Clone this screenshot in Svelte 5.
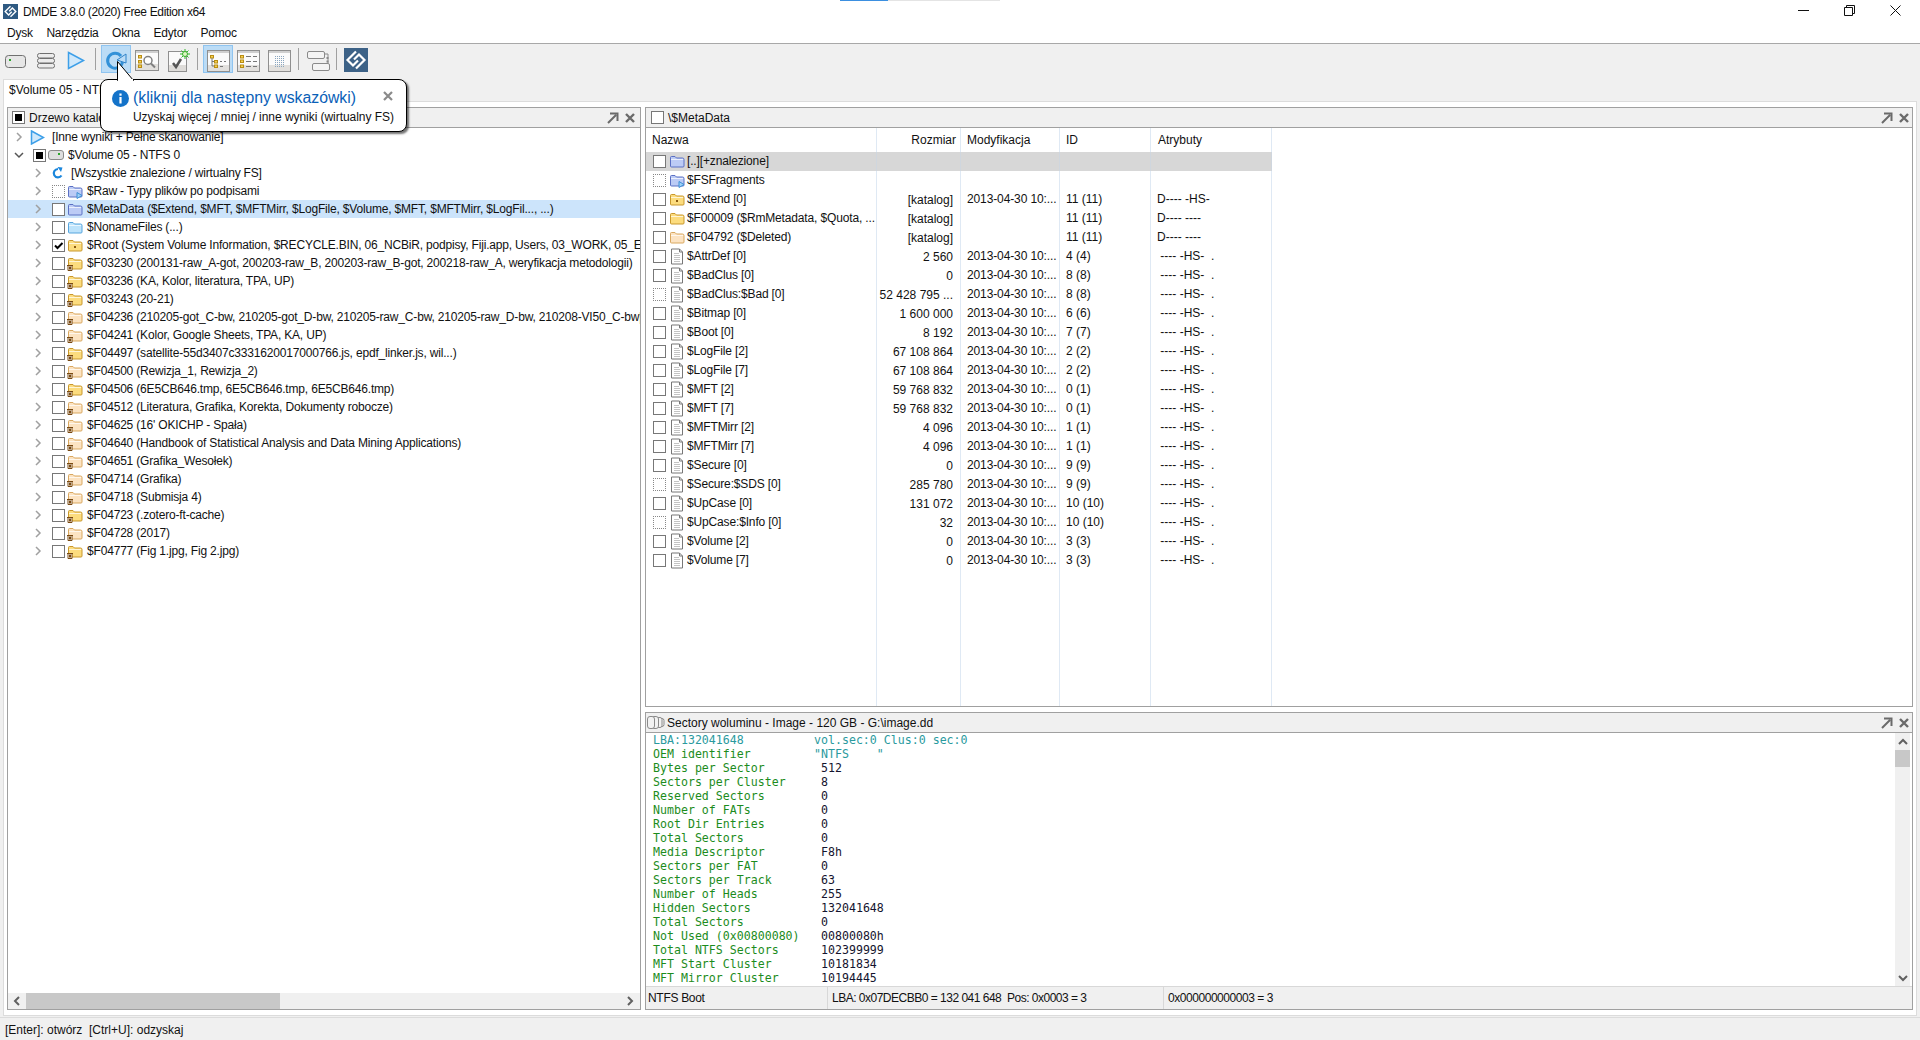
<script>
	const menus = ['Dysk', 'Narzędzia', 'Okna', 'Edytor', 'Pomoc'];

	const tree = [
		{ name: '$F03230 (200131-raw_A-got, 200203-raw_B, 200203-raw_B-got, 200218-raw_A, weryfikacja metodologii)', kind: 'y' },
		{ name: '$F03236 (KA, Kolor, literatura, TPA, UP)', kind: 'y' },
		{ name: '$F03243 (20-21)', kind: 'y' },
		{ name: '$F04236 (210205-got_C-bw, 210205-got_D-bw, 210205-raw_C-bw, 210205-raw_D-bw, 210208-VI50_C-bw[1]...', kind: 'p' },
		{ name: '$F04241 (Kolor, Google Sheets, TPA, KA, UP)', kind: 'p' },
		{ name: '$F04497 (satellite-55d3407c3331620017000766.js, epdf_linker.js, wil...)', kind: 'y' },
		{ name: '$F04500 (Rewizja_1, Rewizja_2)', kind: 'p' },
		{ name: '$F04506 (6E5CB646.tmp, 6E5CB646.tmp, 6E5CB646.tmp)', kind: 'y' },
		{ name: '$F04512 (Literatura, Grafika, Korekta, Dokumenty robocze)', kind: 'p' },
		{ name: "$F04625 (16' OKICHP - Spała)", kind: 'p' },
		{ name: '$F04640 (Handbook of Statistical Analysis and Data Mining Applications)', kind: 'p' },
		{ name: '$F04651 (Grafika_Wesołek)', kind: 'p' },
		{ name: '$F04714 (Grafika)', kind: 'p' },
		{ name: '$F04718 (Submisja 4)', kind: 'p' },
		{ name: '$F04723 (.zotero-ft-cache)', kind: 'y' },
		{ name: '$F04728 (2017)', kind: 'p' },
		{ name: '$F04777 (Fig 1.jpg, Fig 2.jpg)', kind: 'y' }
	];

	const folderColors = {
		y: ['#fcdc7e', '#c9982c'],
		p: ['#fce3c2', '#d9a860'],
		b: ['#bccbf5', '#5b70c4'],
		c: ['#bde3fb', '#56a5dd']
	};

	const date = '2013-04-30 10:...';
	const attr = ' ---- -HS-  .';
	const files = [
		['$AttrDef [0]', '2 560', '4 (4)'],
		['$BadClus [0]', '0', '8 (8)'],
		['$BadClus:$Bad [0]', '52 428 795 ...', '8 (8)', true],
		['$Bitmap [0]', '1 600 000', '6 (6)'],
		['$Boot [0]', '8 192', '7 (7)'],
		['$LogFile [2]', '67 108 864', '2 (2)'],
		['$LogFile [7]', '67 108 864', '2 (2)'],
		['$MFT [2]', '59 768 832', '0 (1)'],
		['$MFT [7]', '59 768 832', '0 (1)'],
		['$MFTMirr [2]', '4 096', '1 (1)'],
		['$MFTMirr [7]', '4 096', '1 (1)'],
		['$Secure [0]', '0', '9 (9)'],
		['$Secure:$SDS [0]', '285 780', '9 (9)', true],
		['$UpCase [0]', '131 072', '10 (10)'],
		['$UpCase:$Info [0]', '32', '10 (10)', true],
		['$Volume [2]', '0', '3 (3)'],
		['$Volume [7]', '0', '3 (3)']
	];

	const boot = [
		['Bytes per Sector', '512'],
		['Sectors per Cluster', '8'],
		['Reserved Sectors', '0'],
		['Number of FATs', '0'],
		['Root Dir Entries', '0'],
		['Total Sectors', '0'],
		['Media Descriptor', 'F8h'],
		['Sectors per FAT', '0'],
		['Sectors per Track', '63'],
		['Number of Heads', '255'],
		['Hidden Sectors', '132041648'],
		['Total Sectors', '0'],
		['Not Used (0x00800080)', '00800080h'],
		['Total NTFS Sectors', '102399999'],
		['MFT Start Cluster', '10181834'],
		['MFT Mirror Cluster', '10194445']
	];
</script>

{#snippet folder(kind, badge = '')}
	<svg class="ico" width="16" height="15" viewBox="0 0 16 15">
		<path d="M1.5 12V3.5q0-1 1-1h3.5l1.5 1.5h6q1.5 0 1.5 1.5V12q0 1-1 1h-11.5q-1 0-1-1z" fill={folderColors[kind][0]} stroke={folderColors[kind][1]} />
		<path d="M2 5.5h12" stroke="#fff" stroke-opacity=".7" />
		{#if badge === 'trash'}
			<path d="M0 9.5h6M1 9.5v5h4v-5M2.5 10.5v3M3.5 10.5v3" fill="#fff" stroke="#7a4a12" />
		{:else if badge === 'dot'}
			<rect x="7" y="8" width="2" height="2" fill="#8a5a10" />
		{:else if badge === 'play'}
			<path d="M10 8.5l5 3-5 3z" fill="#9fd0f5" stroke="#3f8fd6" />
		{/if}
	</svg>
{/snippet}

{#snippet page()}
	<svg class="ico" width="16" height="17" viewBox="0 0 16 17">
		<path d="M2.5 1h8l3 3v12h-11z" fill="#fff" stroke="#777" />
		<path d="M10.5 1v3h3" fill="none" stroke="#777" />
		<path d="M5 5h5v1H5zM5 7h6v1H5zM5 9h6v1H5zM5 11h6v1H5zM5 13h6v1H5z" fill="#c4c4c4" />
	</svg>
{/snippet}

{#snippet chev(open = false)}
	<svg class="chev" width="10" height="10" viewBox="0 0 10 10">
		{#if open}
			<path d="M1 3l4 4 4-4" fill="none" stroke="#555" stroke-width="1.5" />
		{:else}
			<path d="M3 1l4 4-4 4" fill="none" stroke="#a0a0a0" stroke-width="1.5" />
		{/if}
	</svg>
{/snippet}

{#snippet panelTools()}
	<svg class="tools" width="32" height="13" viewBox="0 0 32 13">
		<path d="M2 12L10 4M4 2.5h7.5V10" fill="none" stroke="#6a6a6a" stroke-width="2" />
		<path d="M20 3l8 8M28 3l-8 8" fill="none" stroke="#6a6a6a" stroke-width="2.4" />
	</svg>
{/snippet}

{#snippet logo(size, bg)}
	<svg width={size} height={size} viewBox="0 0 24 24">
		<rect width="24" height="24" fill={bg} />
		<path d="M12 3.500L3.500 12 9 17.500l5-5M12 20.500l8.500-8.500L15 6.500l-5 5" fill="none" stroke="#fff" stroke-width="2.200" />
	</svg>
{/snippet}

<div class="app">
	<div class="progress"><span></span></div>

	<header class="titlebar">
		<span class="applogo">{@render logo(15, '#2f5a82')}</span>
		<span class="apptitle">DMDE 3.8.0 (2020) Free Edition x64</span>
		<div class="winbtns">
			<svg width="11" height="11" viewBox="0 0 11 11"><path d="M0 5.5h11" stroke="#111" /></svg>
			<svg width="11" height="11" viewBox="0 0 11 11"><path d="M.5 2.5h8v8h-8zM2.5 2.5v-2h8v8h-2" fill="none" stroke="#111" /></svg>
			<svg width="11" height="11" viewBox="0 0 11 11"><path d="M.5.5l10 10M10.5.5l-10 10" stroke="#111" /></svg>
		</div>
	</header>

	<nav class="menubar">
		{#each menus as m}<span>{m}</span>{/each}
	</nav>

	<div class="toolbar">
		<button class="tb" aria-label="Dysk">
			<svg width="26" height="24" viewBox="0 0 26 24"><rect x="3.5" y="7.5" width="20" height="12" rx="3" fill="#e6e6e6" stroke="#707070" /><rect x="7" y="11" width="2" height="2" fill="#2aa52a" /></svg>
		</button>
		<button class="tb" aria-label="Partycje">
			<svg width="26" height="24" viewBox="0 0 26 24"><g fill="#ececec" stroke="#707070"><rect x="4.500" y="5.500" width="17" height="4.500" rx="2" /><rect x="4.500" y="10.500" width="17" height="4.500" rx="2" /><rect x="4.500" y="15.500" width="17" height="4.500" rx="2" /></g></svg>
		</button>
		<button class="tb" aria-label="Skanuj">
			<svg width="26" height="24" viewBox="0 0 26 24"><path d="M4.500 4.500l15 8-15 8z" fill="#cfe8fb" stroke="#3d9fe8" stroke-width="1.500" /></svg>
		</button>
		<i class="sep first"></i>
		<button class="tb on" aria-label="Więcej wyników">
			<svg width="26" height="24" viewBox="0 0 26 24"><path d="M18 8A7.500 7.500 0 1 0 19.500 14" fill="none" stroke="#3391d8" stroke-width="3" /><path d="M14 12l9-6v9z" fill="#bcdcf6" stroke="#2f82c8" /></svg>
		</button>
		<button class="tb" aria-label="Szukaj">
			<svg width="26" height="24" viewBox="0 0 26 24"><rect x="1.500" y="2.500" width="23" height="20" fill="#fbfbfb" stroke="#8f8f8f" /><rect x="2" y="3" width="22" height="2" fill="#cfcfcf" /><rect x="2" y="16" width="22" height="6" fill="#e2e0dd" /><g fill="#f6d24e" stroke="#b88c14"><rect x="4.500" y="7.500" width="3" height="2.500" /><rect x="4.500" y="12.500" width="3" height="2.500" /><rect x="4.500" y="17" width="3" height="2.500" /></g><circle cx="14" cy="12.500" r="4" fill="#fff" stroke="#808080" stroke-width="1.500" /><path d="M17 15.500l4 4" stroke="#808080" stroke-width="2" /></svg>
		</button>
		<button class="tb" aria-label="Odzyskaj">
			<svg width="26" height="24" viewBox="0 0 26 24"><rect x="3.500" y="3.500" width="18" height="20" fill="#fafafa" stroke="#8f8f8f" /><rect x="4" y="17" width="17" height="6" fill="#dedcd9" /><path d="M8 15l3 4 5-8" fill="none" stroke="#555" stroke-width="2.500" /><path d="M20 1v10M15 6h10M16.500 2.500l7 7M23.500 2.500l-7 7" stroke="#35b52a" /><circle cx="20" cy="6" r="2.500" fill="#dff5c4" stroke="#35b52a" /></svg>
		</button>
		<i class="sep"></i>
		<button class="tb on" aria-label="Drzewo">
			<svg width="26" height="24" viewBox="0 0 26 24"><rect x="2.500" y="2.500" width="22" height="21" fill="#fbfbfb" stroke="#8f8f8f" /><rect x="3" y="3" width="21" height="2" fill="#cfcfcf" /><rect x="3" y="17" width="21" height="6" fill="#e2e0dd" /><g fill="#f6d24e" stroke="#b88c14"><rect x="5.500" y="7.500" width="3" height="2.500" /><rect x="9.500" y="12.500" width="3" height="2.500" /><rect x="9.500" y="17" width="3" height="2.500" /></g><path d="M7 10v8h2M7 13.500h2M15 13.500h2M19 13.500h2M15 18.500h3" stroke="#777" fill="none" /></svg>
		</button>
		<button class="tb nudge" aria-label="Lista">
			<svg width="26" height="24" viewBox="0 0 26 24"><rect x="2.500" y="2.500" width="22" height="21" fill="#fbfbfb" stroke="#8f8f8f" /><rect x="3" y="3" width="21" height="2" fill="#cfcfcf" /><rect x="3" y="17" width="21" height="6" fill="#e2e0dd" /><g fill="#f6d24e" stroke="#b88c14"><rect x="5.500" y="7.500" width="3" height="2.500" /><rect x="5.500" y="12" width="3" height="2.500" /><rect x="5.500" y="17" width="3" height="2.500" /></g><path d="M11 8.500h5M18 8.500h4M11 13.500h5M18 13.500h4M11 18.500h5M18 18.500h4" stroke="#777" /></svg>
		</button>
		<button class="tb" aria-label="Siatka">
			<svg width="26" height="24" viewBox="0 0 26 24"><rect x="2.500" y="2.500" width="22" height="21" fill="#fbfbfb" stroke="#8f8f8f" /><rect x="3" y="3" width="21" height="2" fill="#cfcfcf" /><rect x="3" y="17" width="21" height="6" fill="#e2e0dd" /><path d="M9 8.500h9M9 10.500h9M9 12.500h9M9 14.500h9M9 16.500h9M9 18.500h9" stroke="#8aa6bf" stroke-dasharray="1 1" /></svg>
		</button>
		<i class="sep wide"></i>
		<button class="tb" aria-label="Okna">
			<svg width="26" height="24" viewBox="0 0 26 24"><g fill="#f4f4f4" stroke="#8a8a8a"><rect x="2.500" y="3.500" width="17" height="7" rx="1.500" /><rect x="7.500" y="15.500" width="17" height="7" rx="1.500" /></g><path d="M20 6h3v9" fill="none" stroke="#8a8a8a" /><path d="M21.500 9h2v2h-2zM21.500 12.500h2v2h-2z" fill="#8a8a8a" /></svg>
		</button>
		<i class="sep last"></i>
		<button class="tb" aria-label="DMDE">{@render logo(24, '#3d6287')}</button>
	</div>

	<div class="tabs">
		<div class="tab">$Volume 05 - NTFS 0</div>
	</div>

	<main class="page">
		<section class="panel left">
			<div class="phead">
				<span class="box small-fill"></span>
				<span class="ptitle">Drzewo katalogów</span>
				{@render panelTools()}
			</div>
			<div class="tree">
				<div class="row l0 top">
					{@render chev()}
					<svg class="rowicon" width="15" height="15" viewBox="0 0 15 15"><path d="M1.500 1l12 6.500-12 6.500z" fill="#cfe8fb" stroke="#3d9fe8" stroke-width="1.500" /></svg>
					<span class="t">[Inne wyniki + Pełne skanowanie]</span>
				</div>
				<div class="row l0">
					{@render chev(true)}
					<span class="box small-fill"></span>
					<svg class="rowicon" width="16" height="10" viewBox="0 0 16 10"><rect x=".5" y=".5" width="15" height="9" rx="2.500" fill="#dedede" stroke="#8a8a8a" /><rect x="10" y="3" width="2" height="2" fill="#2aa52a" /></svg>
					<span class="t">$Volume 05 - NTFS 0</span>
				</div>
				<div class="row l1 all">
					{@render chev()}
					<svg class="rowicon" width="13" height="12" viewBox="0 0 13 12"><path d="M10.500 8.500A4.200 4.200 0 1 1 7 2" fill="none" stroke="#1a86dc" stroke-width="2.200" /><path d="M6.500 0l5 .5-1.500 4.500z" fill="#1a86dc" /></svg>
					<span class="t">[Wszystkie znalezione / wirtualny FS]</span>
				</div>
				<div class="row l1">
					{@render chev()}
					<span class="box dotted"></span>
					{@render folder('b', 'play')}
					<span class="t">$Raw - Typy plików po podpisami</span>
				</div>
				<div class="row l1 sel">
					{@render chev()}
					<span class="box"></span>
					{@render folder('b')}
					<span class="t">$MetaData ($Extend, $MFT, $MFTMirr, $LogFile, $Volume, $MFT, $MFTMirr, $LogFil..., ...)</span>
				</div>
				<div class="row l1">
					{@render chev()}
					<span class="box"></span>
					{@render folder('c')}
					<span class="t">$NonameFiles (...)</span>
				</div>
				<div class="row l1">
					{@render chev()}
					<span class="box checked">
						<svg width="11" height="11" viewBox="0 0 11 11"><path d="M2 5.500l2.500 2.500L9.500 3" fill="none" stroke="#000" stroke-width="2" /></svg>
					</span>
					{@render folder('y', 'dot')}
					<span class="t">$Root (System Volume Information, $RECYCLE.BIN, 06_NCBiR, podpisy, Fiji.app, Users, 03_WORK, 05_Edukacja, ...)</span>
				</div>
				{#each tree as item}
					<div class="row l1">
						{@render chev()}
						<span class="box"></span>
						{@render folder(item.kind, 'trash')}
						<span class="t">{item.name}</span>
					</div>
				{/each}
			</div>
			<div class="hscroll">
				<svg width="8" height="10" viewBox="0 0 8 10"><path d="M6 1L2 5l4 4" fill="none" stroke="#606060" stroke-width="2" /></svg>
				<div class="track"><div class="thumb"></div></div>
				<svg width="8" height="10" viewBox="0 0 8 10"><path d="M2 1l4 4-4 4" fill="none" stroke="#606060" stroke-width="2" /></svg>
			</div>
		</section>

		<div class="rightcol">
			<section class="panel">
				<div class="phead">
					<span class="box"></span>
					<span class="ptitle">\$MetaData</span>
					{@render panelTools()}
				</div>
				<div class="listing">
					<div class="cols head">
						<span class="c1">Nazwa</span>
						<span class="c2">Rozmiar</span>
						<span class="c3">Modyfikacja</span>
						<span class="c4">ID</span>
						<span class="c5">Atrybuty</span>
					</div>
					<div class="cols item up">
						<span class="c1"><span class="box"></span>{@render folder('b')}<b>[..][+znalezione]</b></span>
						<span class="c2"></span><span class="c3"></span><span class="c4"></span><span class="c5"></span>
					</div>
					<div class="cols item">
						<span class="c1"><span class="box dotted"></span>{@render folder('b', 'play')}<b>$FSFragments</b></span>
						<span class="c2"></span><span class="c3"></span><span class="c4"></span><span class="c5"></span>
					</div>
					<div class="cols item">
						<span class="c1"><span class="box"></span>{@render folder('y', 'dot')}<b>$Extend [0]</b></span>
						<span class="c2">[katalog]</span><span class="c3">{date}</span><span class="c4">11 (11)</span><span class="c5">D---- -HS-</span>
					</div>
					<div class="cols item">
						<span class="c1"><span class="box"></span>{@render folder('y')}<b>$F00009 ($RmMetadata, $Quota, ...</b></span>
						<span class="c2">[katalog]</span><span class="c3"></span><span class="c4">11 (11)</span><span class="c5">D---- ----</span>
					</div>
					<div class="cols item">
						<span class="c1"><span class="box"></span>{@render folder('p')}<b>$F04792 ($Deleted)</b></span>
						<span class="c2">[katalog]</span><span class="c3"></span><span class="c4">11 (11)</span><span class="c5">D---- ----</span>
					</div>
					{#each files as f}
						<div class="cols item">
							<span class="c1"><span class="box" class:dotted={f[3]}></span>{@render page()}<b>{f[0]}</b></span>
							<span class="c2">{f[1]}</span><span class="c3">{date}</span><span class="c4">{f[2]}</span><span class="c5">{attr}</span>
						</div>
					{/each}
					<div class="cols fill">
						<span class="c1"></span><span class="c2"></span><span class="c3"></span><span class="c4"></span><span class="c5"></span>
					</div>
				</div>
			</section>

			<section class="panel">
				<div class="phead">
					<svg class="discs" width="18" height="13" viewBox="0 0 18 13"><g fill="#f2f2f2" stroke="#8a8a8a"><rect x="13" y="2.500" width="4" height="8" rx="2" /><rect x="9" y="1.500" width="6" height="10" rx="2" /><rect x="4.500" y=".5" width="7" height="12" rx="2.500" /><rect x=".5" y=".5" width="7" height="12" rx="2.500" /></g></svg>
					<span class="ptitle near">Sectory woluminu - Image - 120 GB - G:\image.dd</span>
					{@render panelTools()}
				</div>
				<div class="hexwrap">
					<div class="hex">
						<div class="ln"><span class="teal k">LBA:132041648</span><span class="teal">vol.sec:0 Clus:0 sec:0</span></div>
						<div class="ln"><span class="green k">OEM identifier</span><span class="teal">"NTFS    "</span></div>
						{#each boot as b}
							<div class="ln"><span class="green k">{b[0]}</span><span class="v">{b[1]}</span></div>
						{/each}
					</div>
					<div class="vscroll">
						<svg width="10" height="8" viewBox="0 0 10 8"><path d="M1 6l4-4 4 4" fill="none" stroke="#606060" stroke-width="2" /></svg>
						<div class="vtrack"><div class="vthumb"></div></div>
						<svg width="10" height="8" viewBox="0 0 10 8"><path d="M1 2l4 4 4-4" fill="none" stroke="#606060" stroke-width="2" /></svg>
					</div>
				</div>
				<div class="pfoot">
					<span class="f1">NTFS Boot</span>
					<span class="f2">LBA: 0x07DECBB0 = 132 041 648&nbsp; Pos: 0x0003 = 3</span>
					<span class="f3">0x000000000003 = 3</span>
				</div>
			</section>
		</div>
	</main>

	<footer class="status">[Enter]: otwórz&nbsp; [Ctrl+U]: odzyskaj</footer>

	<aside class="tip">
		<svg class="tail" width="20" height="20" viewBox="0 0 20 20"><path d="M1.500 0.500V19.500H17.500z" fill="#fff" stroke="#000" /><path d="M2 18h15v2H2z" fill="#fff" /></svg>
		<svg class="info" width="17" height="17" viewBox="0 0 17 17"><circle cx="8.500" cy="8.500" r="8.500" fill="#1473c9" /><rect x="7.400" y="3.500" width="2.200" height="2.200" fill="#fff" /><rect x="7.400" y="7" width="2.200" height="6.500" fill="#fff" /></svg>
		<div class="tiptext">
			<div class="tiptitle">(kliknij dla następny wskazówki)</div>
			<div class="tipsub">Uzyskaj więcej / mniej / inne wyniki (wirtualny FS)</div>
		</div>
		<svg class="tipx" width="10" height="10" viewBox="0 0 10 10"><path d="M1 1l8 8M9 1l-8 8" stroke="#8a8a8a" stroke-width="2.200" /></svg>
	</aside>
</div>

<style>
	:global(body) {
		margin: 0;
		background: #f0f0f0;
	}
	.app {
		position: relative;
		width: 1920px;
		height: 1040px;
		overflow: hidden;
		display: flex;
		flex-direction: column;
		font: 12px/16px 'Liberation Sans', Arial, sans-serif;
		color: #111;
	}
	svg {
		display: block;
		flex: none;
	}
	.progress {
		position: absolute;
		top: 0;
		left: 840px;
		width: 160px;
		height: 1px;
		background: #e4e4e4;
	}
	.progress span {
		display: block;
		width: 48px;
		height: 1px;
		background: #3b8fe0;
	}
	.titlebar {
		height: 22px;
		background: #fff;
		display: flex;
		align-items: center;
		padding: 2px 0 0 3px;
		box-sizing: border-box;
	}
	.applogo {
		width: 20px;
		margin-top: -2px;
	}
	.apptitle {
		letter-spacing: -0.35px;
	}
	.winbtns {
		margin-left: auto;
		display: flex;
		gap: 35px;
		padding-right: 19px;
		margin-top: -4px;
	}
	.menubar {
		height: 22px;
		background: #fff;
		border-bottom: 1px solid #a8a8a8;
		box-sizing: border-box;
		display: flex;
		align-items: center;
		gap: 13.5px;
		padding: 1px 0 0 7px;
		letter-spacing: -0.2px;
	}
	.toolbar {
		height: 32px;
		padding-top: 1px;
		box-sizing: border-box;
		display: flex;
		align-items: flex-start;
	}
	.tb {
		width: 30px;
		height: 28px;
		margin-right: 1px;
		padding: 2px 0 0;
		border: 1px solid transparent;
		background: none;
		display: flex;
		align-items: center;
		justify-content: center;
	}
	.tb:last-child {
		margin-right: 0;
	}
	.tb.nudge {
		margin-left: -1px;
	}
	.tb.on {
		background: #bbdcf6;
		border-color: #8fc4f0;
	}
	.sep {
		width: 1px;
		height: 22px;
		margin: 3px 5px 0 3px;
		background: #a0a0a0;
	}
	.sep.first {
		margin-left: 2px;
	}
	.sep.wide {
		margin: 3px 4px 0 3px;
	}
	.sep.last {
		margin: 3px 4px 0 2px;
	}
	.tabs {
		height: 25px;
		padding: 3px 0 0 3px;
		box-sizing: border-box;
	}
	.tab {
		width: 140px;
		height: 23px;
		box-sizing: border-box;
		padding: 2px 0 0 5px;
		background: #fff;
		border: 1px solid #dcdcdc;
		border-bottom: 0;
		position: relative;
		z-index: 1;
	}
	.page {
		margin: 0 3px;
		height: 915px;
		box-sizing: border-box;
		padding: 5px 3px;
		background: #fff;
		border: 1px solid #dcdcdc;
		display: grid;
		grid-template-columns: 634px 1268px;
		gap: 4px;
	}
	.rightcol {
		display: grid;
		grid-template-rows: 600px 298px;
		gap: 5px;
		min-height: 0;
	}
	.panel {
		border: 1px solid #a0a0a0;
		display: flex;
		flex-direction: column;
		background: #fff;
		min-height: 0;
		min-width: 0;
		overflow: hidden;
	}
	.phead {
		height: 20px;
		flex: none;
		box-sizing: border-box;
		background: #f0f0f0;
		border-bottom: 1px solid #a0a0a0;
		display: flex;
		align-items: center;
		padding-left: 5px;
	}
	.left .phead {
		padding-left: 4px;
	}
	.ptitle {
		margin-left: 4px;
	}
	.ptitle.near {
		margin-left: 2px;
	}
	.tools {
		margin-left: auto;
		margin-right: 0;
	}
	.left .tools {
		margin-right: 2px;
	}
	.discs {
		margin-left: -4px;
	}
	.box {
		width: 13px;
		height: 13px;
		box-sizing: border-box;
		flex: none;
		border: 1px solid #777;
		background: #fff;
		display: block;
		position: relative;
	}
	.box.small-fill::after {
		content: '';
		position: absolute;
		inset: 2px;
		background: #000;
	}
	.box.dotted {
		border: 1px dotted #888;
	}
	.tree {
		flex: 1;
		min-height: 0;
		overflow: hidden;
		letter-spacing: -0.18px;
	}
	.row {
		height: 18px;
		display: flex;
		align-items: center;
		white-space: nowrap;
		overflow: hidden;
	}
	.row .chev {
		margin-right: 9px;
	}
	.row.l0 {
		padding-left: 6px;
	}
	.row.l1 {
		padding-left: 25px;
	}
	.row.sel {
		background: #cce4fb;
	}
	.row .box {
		margin-right: 2px;
	}
	.row .ico {
		margin-right: 4px;
	}
	.row .rowicon {
		margin-right: 4px;
	}
	.row.top .rowicon {
		margin-left: -3px;
		margin-right: 7px;
	}
	.row.all .rowicon {
		margin-left: -1px;
		margin-right: 7px;
	}
	.hscroll {
		height: 16px;
		flex: none;
		background: #f0f0f0;
		display: flex;
		align-items: center;
		padding: 0 6px 0 5px;
	}
	.track {
		flex: 1;
		height: 16px;
		margin: 0 4px 0 1px;
	}
	.thumb {
		width: 254px;
		height: 16px;
		margin-left: 4px;
		background: #c8c8c8;
	}
	.listing {
		flex: 1;
		min-height: 0;
		display: flex;
		flex-direction: column;
		overflow: hidden;
	}
	.cols {
		display: grid;
		grid-template-columns: 231px 84px 99px 91px 121px;
		width: 626px;
		height: 24px;
		flex: none;
		align-items: stretch;
		white-space: pre;
	}
	.cols > span {
		display: flex;
		align-items: center;
		border-right: 1px solid #dfe9f4;
		padding-left: 6px;
		min-width: 0;
		overflow: hidden;
	}
	.cols .c2 {
		justify-content: flex-end;
		padding: 0 7px 0 0;
	}
	.head .c2 {
		padding-right: 4px;
	}
	.head .c5 {
		padding-left: 7px;
	}
	.cols .c1 {
		padding-left: 6px;
	}
	.item {
		height: 19px;
	}
	.item > span {
		padding-bottom: 1px;
		box-sizing: border-box;
	}
	.item .c1 {
		padding-left: 7px;
	}
	.item .c3 {
		letter-spacing: -0.12px;
	}
	.item .c1 .ico {
		margin-left: 3px;
	}
	.item b {
		font-weight: 400;
		margin-left: 2px;
		letter-spacing: -0.15px;
	}
	.up {
		background: #d7d7d7;
	}
	.up > span {
		border-right-color: #cfd6de;
	}
	.fill {
		flex: 1;
	}
	.hexwrap {
		flex: 1;
		min-height: 0;
		display: flex;
	}
	.hex {
		flex: 1;
		padding-left: 7px;
		font: 11.6px/14px 'DejaVu Sans Mono', monospace;
	}
	.ln {
		height: 14px;
		white-space: pre;
		display: flex;
	}
	.k {
		width: 161px;
		flex: none;
	}
	.ln .v {
		margin-left: 7px;
		color: #14142e;
	}
	.teal {
		color: #2a9a9e;
	}
	.green {
		color: #1c8c1c;
	}
	.vscroll {
		width: 15px;
		margin-right: 2px;
		background: #f0f0f0;
		display: flex;
		flex-direction: column;
		align-items: center;
	}
	.vscroll svg {
		margin: 5px 0 4px;
	}
	.vtrack {
		flex: 1;
		align-self: stretch;
	}
	.vthumb {
		height: 17px;
		background: #c8c8c8;
	}
	.pfoot {
		height: 23px;
		flex: none;
		box-sizing: border-box;
		background: #f0f0f0;
		border-top: 1px solid #d8d8d8;
		display: flex;
		align-items: center;
	}
	.pfoot span {
		height: 100%;
		display: flex;
		align-items: center;
		box-sizing: border-box;
		white-space: pre;
	}
	.f1 {
		width: 182px;
		padding-left: 2px;
		border-right: 1px solid #d8d8d8;
		letter-spacing: -0.3px;
	}
	.f2 {
		width: 336px;
		padding-left: 4px;
		border-right: 1px solid #d8d8d8;
		letter-spacing: -0.5px;
	}
	.f3 {
		padding-left: 4px;
		letter-spacing: -0.45px;
	}
	.status {
		margin-top: 1px;
		flex: 1;
		border-top: 1px solid #dcdcdc;
		padding: 4px 0 0 5px;
	}
	.tip {
		position: absolute;
		left: 100px;
		top: 79px;
		width: 307px;
		height: 53px;
		box-sizing: border-box;
		background: #fff;
		border: 1px solid #000;
		border-radius: 8px;
		box-shadow: 2px 2px 2px rgba(0, 0, 0, 0.55);
		z-index: 3;
	}
	.tail {
		position: absolute;
		left: 15px;
		top: -19px;
	}
	.info {
		position: absolute;
		left: 11px;
		top: 10px;
	}
	.tiptext {
		position: absolute;
		left: 32px;
		top: 8px;
		white-space: nowrap;
	}
	.tiptitle {
		font-size: 15.8px;
		line-height: 20px;
		color: #0a5fb8;
	}
	.tipsub {
		margin-top: 1px;
		line-height: 16px;
		letter-spacing: -0.05px;
	}
	.tipx {
		position: absolute;
		left: 282px;
		top: 11px;
	}
</style>
